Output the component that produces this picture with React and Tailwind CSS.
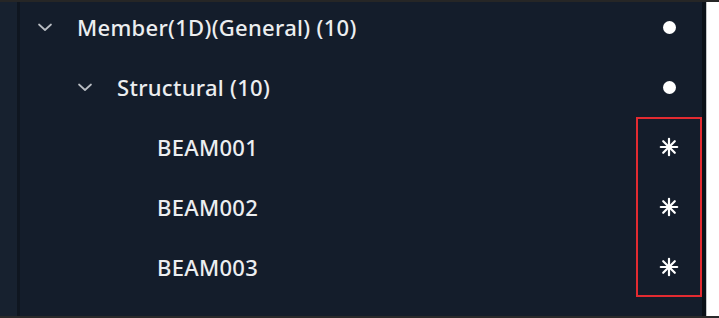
import React from 'react'

const rows = [
  { label: 'Member(1D)(General) (10)', level: 0, expandable: true, mark: 'dot' },
  { label: 'Structural (10)', level: 1, expandable: true, mark: 'dot' },
  { label: 'BEAM001', level: 2, expandable: false, mark: 'star' },
  { label: 'BEAM002', level: 2, expandable: false, mark: 'star' },
  { label: 'BEAM003', level: 2, expandable: false, mark: 'star' },
]

const indent = ['pl-[17px]', 'pl-[57px]', 'pl-[97px]']

function Chevron() {
  return (
    <svg width="16" height="16" viewBox="0 0 16 16" fill="none">
      <path d="M2 5.5 L8 11 L14 5.5" stroke="#b9bdc3" strokeWidth="1.7" strokeLinecap="round" strokeLinejoin="round" />
    </svg>
  )
}

function Star() {
  return (
    <svg width="20" height="20" viewBox="0 0 20 20" fill="none">
      <g stroke="#ffffff" strokeWidth="2.2" strokeLinecap="round">
        <line x1="10" y1="1.8" x2="10" y2="18.2" />
        <line x1="1.8" y1="10" x2="18.2" y2="10" />
        <line x1="4.2" y1="4.2" x2="15.8" y2="15.8" />
        <line x1="15.8" y1="4.2" x2="4.2" y2="15.8" />
      </g>
    </svg>
  )
}

function TreeRow({ row }) {
  return (
    <div className={`h-[60px] flex items-center pr-[21px] ${indent[row.level]}`}>
      <div className="w-4 h-4 flex items-center justify-center shrink-0">
        {row.expandable && <Chevron />}
      </div>
      <span className="ml-6 flex-1 text-[22px] font-medium text-[#eceef0] leading-none tracking-[0.3px]">
        {row.label}
      </span>
      <div className="w-6 h-6 flex items-center justify-center shrink-0">
        {row.mark === 'dot' ? (
          <div className="w-[13px] h-[13px] rounded-full bg-white" />
        ) : (
          <Star />
        )}
      </div>
    </div>
  )
}

export default function App() {
  return (
    <div
      className="w-[719px] h-[318px] flex flex-col bg-[#141d2b] overflow-hidden"
      style={{ fontFamily: '"Noto Sans", "Liberation Sans", sans-serif' }}
    >
      <div className="h-[2px] bg-[#262626] shrink-0" />
      <div className="flex-1 flex min-h-0">
        <div className="w-[17px] bg-[#17212f] shrink-0" />
        <div className="w-[3px] bg-[#0f1620] shrink-0" />
        <div className="relative flex-1 overflow-hidden">
          <div className="-mt-[5px]">
            {rows.map((row) => (
              <TreeRow key={row.label} row={row} />
            ))}
          </div>
          <div className="absolute left-[616px] top-[115px] w-[66px] h-[180px] border-2 border-[#e32b31]" />
        </div>
        <div className="w-[4px] bg-[#0b1118] shrink-0" />
        <div className="w-px bg-[#c4c6c8] shrink-0" />
        <div className="w-[12px] bg-white shrink-0" />
      </div>
      <div className="h-[2px] bg-[#2a2a2a] shrink-0" />
    </div>
  )
}
